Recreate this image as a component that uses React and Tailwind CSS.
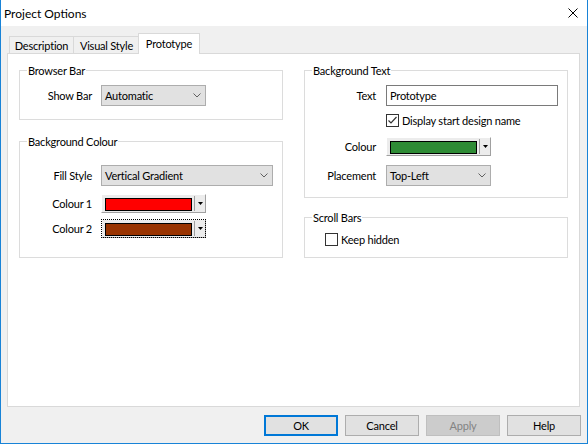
import React from 'react';

function Chevron() {
  return (
    <svg width="8" height="5" viewBox="0 0 8 5" className="shrink-0">
      <polyline points="0.5,0.5 4,4 7.5,0.5" fill="none" stroke="#606060" strokeWidth="1" />
    </svg>
  );
}

function Select({ value, width }) {
  return (
    <div className={`${width} h-[21px] flex items-center justify-between bg-[#e1e1e1] border border-[#adadad] pl-[3px] pr-[4px]`}>
      <span>{value}</span>
      <Chevron />
    </div>
  );
}

function ColourButton({ colour, focused }) {
  return (
    <div
      className={`w-[105px] h-[19px] flex items-center bg-[#ececec] border border-t-white border-l-white border-r-[#a0a0a0] border-b-[#a0a0a0] ${
        focused ? 'outline-1 outline-dotted outline-black -outline-offset-1' : ''
      }`}
    >
      <div className={`ml-[3px] mt-[1px] w-[87px] h-[13px] border border-black ${colour}`} />
      <div className="ml-[2px] w-px h-[15px] bg-[#a0a0a0]" />
      <div className="flex-1 flex justify-center">
        <svg width="5" height="3" viewBox="0 0 5 3">
          <polygon points="0,0 5,0 2.5,3" fill="#000" />
        </svg>
      </div>
    </div>
  );
}

function Checkbox({ checked }) {
  return (
    <div className="w-[13px] h-[13px] border border-[#333333] bg-white flex items-center justify-center shrink-0">
      {checked && (
        <svg width="11" height="11" viewBox="0 0 11 11">
          <polyline points="1.5,5.5 4,8 9.5,2" fill="none" stroke="#333333" strokeWidth="1.2" />
        </svg>
      )}
    </div>
  );
}

function Row({ label, labelWidth, gap, className = '', children }) {
  return (
    <div className={`flex items-center ${className}`}>
      <div className={`${labelWidth} text-right ${gap}`}>{label}</div>
      {children}
    </div>
  );
}

function Group({ title, height, className = '', children }) {
  return (
    <fieldset className={`border border-[#dcdcdc] ${height} ${className}`}>
      <legend className="ml-[7px] px-[1px] leading-[15px]">{title}</legend>
      {children}
    </fieldset>
  );
}

function Button({ children, variant }) {
  const styles = {
    default: 'border border-[#adadad] bg-[#e1e1e1]',
    primary: 'border-2 border-[#0078d7] bg-[#e1e1e1]',
    disabled: 'border border-[#bfbfbf] bg-[#cccccc] text-[#838383]',
  };
  return (
    <div className={`w-[74px] h-[21px] flex items-center justify-center ${styles[variant || 'default']}`}>
      {children}
    </div>
  );
}

export default function App() {
  return (
    <div className="w-[588px] h-[444px] flex flex-col bg-[#f0f0f0] border-x border-b border-[#1883d7] font-['Lato',sans-serif] text-[11px] tracking-[-0.2px] text-black leading-[15px]">
      {/* title bar */}
      <div className="h-[26px] shrink-0 bg-white flex items-center justify-between pl-[3px] pr-[9px] text-[12px] tracking-normal">
        <span>Project Options</span>
        <svg width="10" height="10" viewBox="0 0 10 10">
          <path d="M0.5 0.5 L9.5 9.5 M9.5 0.5 L0.5 9.5" stroke="#000" strokeWidth="1" />
        </svg>
      </div>

      <div className="flex-1 flex flex-col pl-[6px] pr-[7px]">
        {/* tabs */}
        <div className="mt-[7px] h-[20px] flex items-end pl-[2px] relative z-10">
          <div className="w-[65px] h-[17px] flex items-center justify-center border-t border-x border-[#d9d9d9] bg-[#f0f0f0]">
            Description
          </div>
          <div className="-ml-px w-[67px] h-[17px] flex items-center justify-center border-t border-x border-[#d9d9d9] bg-[#f0f0f0]">
            Visual Style
          </div>
          <div className="-ml-[2px] -mb-px w-[62px] h-[21px] flex items-center justify-center border-t border-x border-[#d9d9d9] bg-white pb-[2px]">
            Prototype
          </div>
        </div>

        {/* tab panel */}
        <div className="h-[354px] bg-white border border-[#d9d9d9] pt-[9px] pl-[11px] grid grid-cols-[264px_264px] gap-x-[21px] content-start">
          <div className="flex flex-col">
            <Group title="Browser Bar" height="h-[57px]">
              <Row label="Show Bar" labelWidth="w-[72px]" gap="mr-[9px]" className="mt-[7px]">
                <Select value="Automatic" width="w-[105px]" />
              </Row>
            </Group>
            <Group title="Background Colour" height="h-[124px]" className="mt-[14px]">
              <Row label="Fill Style" labelWidth="w-[72px]" gap="mr-[9px]" className="mt-[16px]">
                <Select value="Vertical Gradient" width="w-[172px]" />
              </Row>
              <Row label="Colour 1" labelWidth="w-[72px]" gap="mr-[9px]" className="mt-[8px]">
                <ColourButton colour="bg-[#ff0000]" />
              </Row>
              <Row label="Colour 2" labelWidth="w-[72px]" gap="mr-[9px]" className="mt-[6px]">
                <ColourButton colour="bg-[#993300]" focused />
              </Row>
            </Group>
          </div>

          <div className="flex flex-col">
            <Group title="Background Text" height="h-[135px]">
              <Row label="Text" labelWidth="w-[71px]" gap="mr-[10px]" className="mt-[7px]">
                <div className="w-[172px] h-[21px] border border-[#7a7a7a] bg-white flex items-center pl-[3px]">
                  Prototype
                </div>
              </Row>
              <div className="mt-[8px] h-[13px] pl-[81px] flex items-center">
                <Checkbox checked />
                <span className="ml-[3px]">Display start design name</span>
              </div>
              <Row label="Colour" labelWidth="w-[71px]" gap="mr-[10px]" className="mt-[10px]">
                <ColourButton colour="bg-[#2e8b35]" />
              </Row>
              <Row label="Placement" labelWidth="w-[71px]" gap="mr-[10px]" className="mt-[9px]">
                <Select value="Top-Left" width="w-[105px]" />
              </Row>
            </Group>
            <Group title="Scroll Bars" height="h-[48px]" className="mt-[12px]">
              <div className="mt-[8px] h-[13px] pl-[20px] flex items-center">
                <Checkbox />
                <span className="ml-[3px]">Keep hidden</span>
              </div>
            </Group>
          </div>
        </div>

        {/* dialog buttons */}
        <div className="mt-[8px] -mr-px flex justify-end gap-[7px]">
          <Button variant="primary">OK</Button>
          <Button>Cancel</Button>
          <Button variant="disabled">Apply</Button>
          <Button>Help</Button>
        </div>
      </div>
    </div>
  );
}
